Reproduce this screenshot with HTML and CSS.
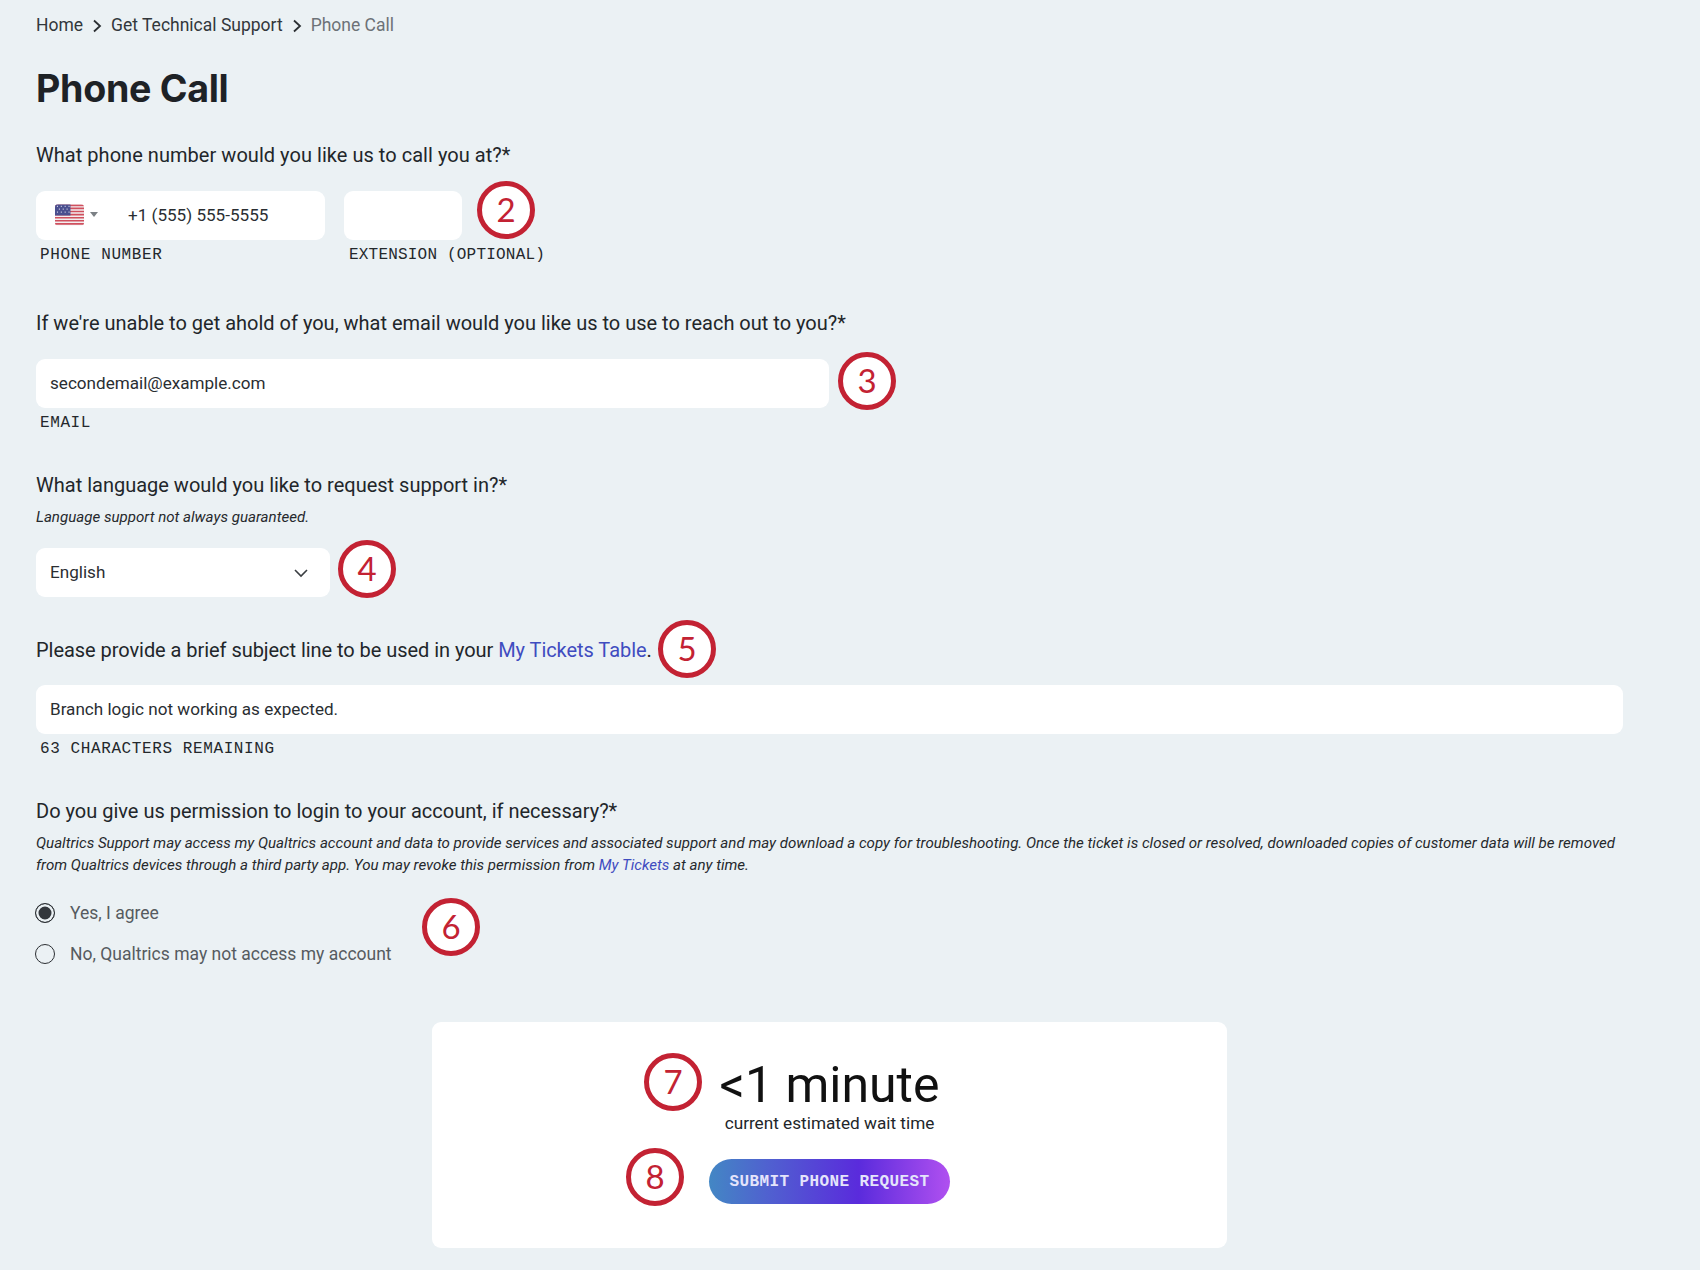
FILE: index.html
```html
<!DOCTYPE html>
<html lang="en">
<head>
<meta charset="utf-8">
<title>Phone Call</title>
<link rel="stylesheet" href="styles.css">
</head>
<body>
<main class="page">
  <nav class="crumbs">
    <span>Home</span>
    <svg class="crumb-sep" viewBox="0 0 10 14"><path d="M2 1.5 8 7l-6 5.5"/></svg>
    <span>Get Technical Support</span>
    <svg class="crumb-sep" viewBox="0 0 10 14"><path d="M2 1.5 8 7l-6 5.5"/></svg>
    <span class="crumb-current">Phone Call</span>
  </nav>
  <h1 class="title">Phone Call</h1>

  <section class="q q-phone">
    <p class="question">What phone number would you like us to call you at?*</p>
    <div class="row">
      <div class="field">
        <div class="input input-phone">
          <svg class="flag" viewBox="0 0 30 22">
            <defs><clipPath id="flagclip"><rect width="30" height="22" rx="3"/></clipPath></defs>
            <g clip-path="url(#flagclip)">
              <rect width="30" height="22" fill="#f3eef0"/>
              <path d="M0 1h30M0 4.2h30M0 7.4h30M0 10.6h30M0 13.8h30M0 17h30M0 20.2h30" stroke="#d0505e" stroke-width="1.7"/>
              <rect width="16" height="11.5" fill="#4a4f8f"/>
              <path d="M2 2h1M6 2h1M10 2h1M14 2h1M4 5h1M8 5h1M12 5h1M2 8h1M6 8h1M10 8h1M14 8h1" stroke="#d8d8ea" stroke-width="1.2"/>
            </g>
          </svg>
          <span class="caret"></span>
          <span class="phone-number">+1 (555) 555-5555</span>
        </div>
        <div class="hint">PHONE NUMBER</div>
      </div>
      <div class="field">
        <div class="input input-ext"></div>
        <div class="hint hint-ext">EXTENSION (OPTIONAL)</div>
      </div>
    </div>
  </section>

  <section class="q q-email">
    <p class="question">If we're unable to get ahold of you, what email would you like us to use to reach out to you?*</p>
    <div class="input input-email">secondemail@example.com</div>
    <div class="hint">EMAIL</div>
  </section>

  <section class="q q-lang">
    <p class="question">What language would you like to request support in?*</p>
    <p class="note note-lang">Language support not always guaranteed.</p>
    <div class="input input-select">
      <span>English</span>
      <svg class="chevron" viewBox="0 0 16 10"><path d="M2 2l6 6 6-6"/></svg>
    </div>
  </section>

  <section class="q q-subject">
    <p class="question">Please provide a brief subject line to be used in your <a class="link">My Tickets Table</a>.</p>
    <div class="input input-subject">Branch logic not working as expected.</div>
    <div class="hint">63 CHARACTERS REMAINING</div>
  </section>

  <section class="q q-perm">
    <p class="question">Do you give us permission to login to your account, if necessary?*</p>
    <p class="note note-perm">Qualtrics Support may access my Qualtrics account and data to provide services and associated support and may download a copy for troubleshooting. Once the ticket is closed or resolved, downloaded copies of customer data will be removed from Qualtrics devices through a third party app. You may revoke this permission from <a class="link">My Tickets</a> at any time.</p>
    <div class="radios">
      <div class="radio-row"><span class="radio radio-on"></span><span>Yes, I agree</span></div>
      <div class="radio-row"><span class="radio"></span><span>No, Qualtrics may not access my account</span></div>
    </div>
  </section>

  <section class="wait-card">
    <div class="wait-time">&lt;1 minute</div>
    <div class="wait-label">current estimated wait time</div>
    <div class="submit">SUBMIT PHONE REQUEST</div>
  </section>

  <span class="callout c2">2</span>
  <span class="callout c3">3</span>
  <span class="callout c4">4</span>
  <span class="callout c5">5</span>
  <span class="callout c6">6</span>
  <span class="callout c7">7</span>
  <span class="callout c8">8</span>
</main>
</body>
</html>
```
FILE: styles.css
```css
* { box-sizing: border-box; }
html, body { margin: 0; height: 100%; }
body {
  background: #ebf1f4;
  color: #1f2428;
  font-family: "Roboto", "Liberation Sans", sans-serif;
  overflow: hidden;
}
.page { position: relative; width: 1700px; height: 1270px; padding: 0 35px 0 36px; }
.crumbs {
  display: flex; align-items: center; gap: 9px;
  height: 25px; margin: 0; padding-top: 25px;
  font-size: 17.5px; color: #32373b;
}
.crumb-sep { width: 10px; height: 14px; fill: none; stroke: #2a2e32; stroke-width: 1.8; margin-top: 1px; }
.crumb-current { color: #6d7277; }
.title { margin: 41px 0 0; font-family: "Inter", "Liberation Sans", sans-serif; font-size: 37.6px; line-height: 46px; font-weight: 700; color: #1e2226; letter-spacing: -0.3px; }
.q { margin: 0; }
.question { margin: 0; font-size: 20px; line-height: 26px; color: #22262a; }
.row { display: flex; gap: 19px; }
.input {
  background: #fff; border-radius: 9px; height: 49px;
  display: flex; align-items: center;
  padding: 0 14px 2px; font-size: 17.1px; color: #2a2e32;
}
.hint {
  font-family: "Liberation Mono", monospace; font-size: 16px; line-height: 18px;
  letter-spacing: 0.6px; color: #24282c; padding-left: 4px; margin-top: 6px;
}
.hint-ext { letter-spacing: 0.2px; padding-left: 5px; }
.q-phone { margin-top: 30px; }
.q-phone .question { letter-spacing: 0.04px; }
.q-phone .row { margin-top: 23px; }
.input-phone { width: 289px; padding-left: 19px; }
.flag { width: 29px; height: 22px; flex: none; }
.caret {
  width: 0; height: 0; margin-left: 6px; flex: none;
  border-left: 4.5px solid transparent; border-right: 4.5px solid transparent; border-top: 5px solid #7b8085;
}
.phone-number { margin-left: 30px; }
.input-ext { width: 118px; }
.q-email { margin-top: 46px; }
.input-email { width: 793px; margin-top: 23px; }
.q-lang { margin-top: 40px; }
.note { margin: 0; font-style: italic; font-size: 15.1px; color: #26292d; }
.note-lang { line-height: 20px; margin-top: 9px; }
.input-select { width: 294px; margin-top: 21px; justify-content: space-between; }
.chevron { width: 16px; height: 10px; fill: none; stroke: #3a3e42; stroke-width: 1.6; margin: 3px 7px 0 0; }
.q-subject { margin-top: 40px; }
.q-subject .question { letter-spacing: -0.05px; }
.link { color: #3f4cc0; }
.input-subject { width: 1587px; margin-top: 22px; }
.q-perm { margin-top: 40px; }
.note-perm { line-height: 22px; margin-top: 8px; width: 1600px; }
.radios { margin: 25px 0 0 -1px; display: flex; flex-direction: column; gap: 17px; }
.radio-row { display: flex; align-items: center; gap: 15px; height: 24px; font-size: 17.5px; color: #565b60; }
.radio { width: 20px; height: 20px; border-radius: 50%; border: 1.6px solid #2b2f33; background: transparent; flex: none; }
.radio-on { background: #33373c; box-shadow: inset 0 0 0 2.5px #ebf1f4; }
.wait-card {
  width: 795px; height: 226px; margin: 56px 0 0 396px;
  background: #fff; border-radius: 9px;
  display: flex; flex-direction: column; align-items: center; padding-top: 34px;
}
.wait-time { font-size: 50px; line-height: 58px; color: #111; }
.wait-label { font-size: 17.2px; line-height: 20px; color: #22262a; margin-top: -1px; }
.submit {
  width: 241px; height: 45px; margin-top: 26px; border-radius: 23px;
  background: linear-gradient(90deg, #4387c4 0%, #5060d0 25%, #5a2bdc 62%, #b050f0 100%);
  color: #e4e4fb; font-family: "Liberation Mono", monospace; font-weight: 700; font-size: 16px; letter-spacing: 0.4px;
  display: flex; align-items: center; justify-content: center;
}
.callout {
  position: absolute; width: 58px; height: 58px; border-radius: 50%;
  border: 5px solid #c32233; background: #fff; color: #c32233;
  font-family: "Lato", "Liberation Sans", sans-serif; font-size: 33px; line-height: 47px; text-align: center;
}
.c2 { left: 477px; top: 181px; }
.c3 { left: 838px; top: 352px; }
.c4 { left: 338px; top: 540px; }
.c5 { left: 658px; top: 620px; }
.c6 { left: 422px; top: 898px; }
.c7 { left: 644px; top: 1053px; }
.c8 { left: 626px; top: 1148px; }
```
